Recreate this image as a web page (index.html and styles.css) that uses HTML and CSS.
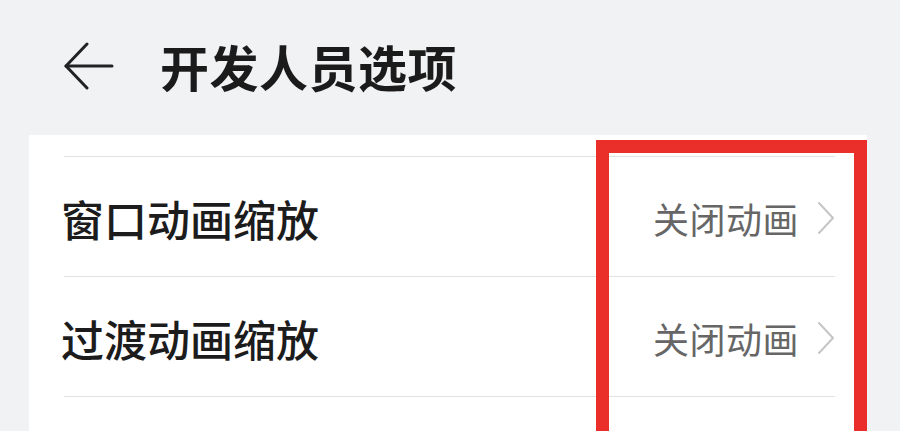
FILE: index.html
```html
<!DOCTYPE html>
<html lang="zh-CN">
<head>
<meta charset="utf-8">
<link rel="stylesheet" href="styles.css">
</head>
<body>
<header class="topbar">
  <svg class="back" width="50" height="48" viewBox="0 0 50 48" fill="none" stroke="#222" stroke-width="3" stroke-linecap="round" stroke-linejoin="round">
    <path d="M48 24H2"/>
    <path d="M23 2L2 24L23 46"/>
  </svg>
  <h1 class="title">开发人员选项</h1>
</header>
<main class="card">
  <div class="row">
    <span class="label">窗口动画缩放</span>
    <span class="value">关闭动画
      <svg class="chev" width="18" height="34" viewBox="0 0 18 34" fill="none" stroke="#c6c6c6" stroke-width="2" stroke-linecap="round" stroke-linejoin="round"><path d="M2 2L16 17L2 32"/></svg>
    </span>
  </div>
  <div class="row">
    <span class="label">过渡动画缩放</span>
    <span class="value">关闭动画
      <svg class="chev" width="18" height="34" viewBox="0 0 18 34" fill="none" stroke="#c6c6c6" stroke-width="2" stroke-linecap="round" stroke-linejoin="round"><path d="M2 2L16 17L2 32"/></svg>
    </span>
  </div>
  <div class="row"></div>
  <div class="highlight"></div>
</main>
</body>
</html>
```
FILE: styles.css
```css
html, body {
  margin: 0;
  padding: 0;
  background: #f1f2f4;
  overflow: hidden;
  height: 431px;
  font-family: "Noto Sans CJK SC", "Noto Sans", sans-serif;
}
.topbar {
  height: 135px;
  display: flex;
  align-items: center;
  padding-left: 64px;
  box-sizing: border-box;
  padding-bottom: 4px;
}
.back {
  display: block;
  flex: none;
}
.title {
  margin: 0 0 0 46px;
  font-size: 49px;
  font-weight: 700;
  color: #1b1b1b;
  line-height: 1;
  letter-spacing: 0.5px;
}
.card {
  position: relative;
  margin-left: 29px;
  width: 838px;
  height: 296px;
  background: #fff;
  padding: 21px 32px 0 35px;
  box-sizing: border-box;
  overflow: hidden;
}
.row {
  height: 120px;
  border-top: 1px solid #e2e2e2;
  display: flex;
  align-items: center;
  justify-content: space-between;
  box-sizing: border-box;
}
.label {
  font-size: 43px;
  font-weight: 500;
  color: #1c1c1c;
  margin-left: -3px;
  margin-top: 2px;
}
.value {
  display: flex;
  align-items: center;
  gap: 18px;
  font-size: 36px;
  letter-spacing: 0.5px;
  color: #666;
  margin-top: 2px;
}
.chev {
  display: block;
}
.highlight {
  position: absolute;
  left: 567px;
  top: 5px;
  width: 271px;
  height: 320px;
  border: 13px solid #ea2f2a;
  box-sizing: border-box;
}
```
